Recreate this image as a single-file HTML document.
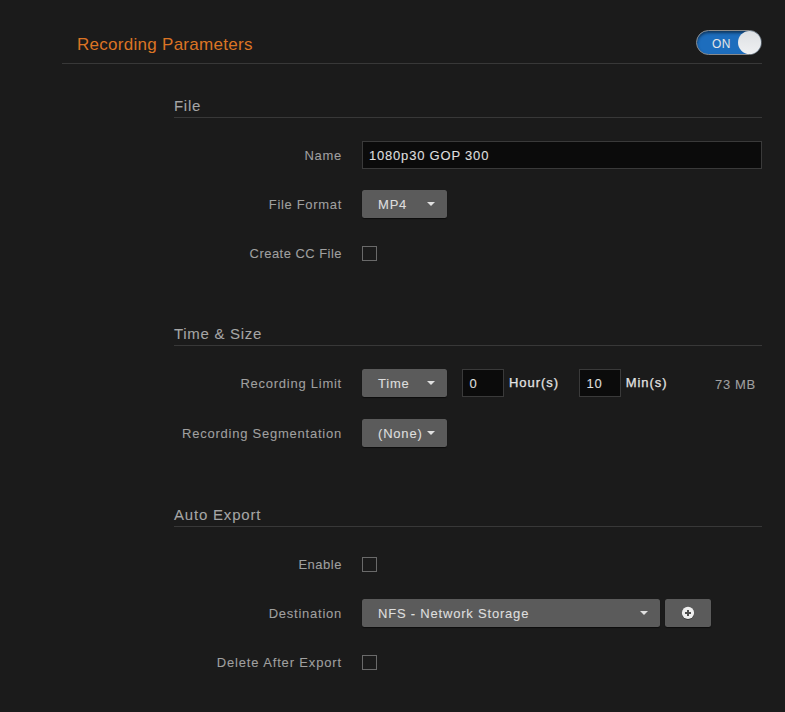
<!DOCTYPE html>
<html><head><meta charset="utf-8">
<style>
*{box-sizing:border-box;margin:0;padding:0}
html,body{width:785px;height:712px;overflow:hidden;background:#1b1b1b;font-family:"Liberation Sans",sans-serif}
.a{position:absolute}
.title{left:77px;top:35px;font-size:17px;color:#db7424;letter-spacing:0.28px;white-space:nowrap;line-height:20px}
.hr{height:1px;background:#383838}
.toggle{left:696px;top:30px;width:66px;height:25px;border-radius:13px;background:#1d6dbd;border:1px solid #8a8a8a;box-shadow:inset 0 2px 3px rgba(0,0,0,.5)}
.knob{left:738px;top:31px;width:23px;height:23px;border-radius:50%;background:linear-gradient(to bottom,#dde0e3,#eff0f2);box-shadow:1px 0 1px rgba(0,0,0,.35)}
.on{left:712px;top:37px;font-size:12px;color:#e6e6e6;line-height:14px;letter-spacing:0.3px}
.sec{left:174px;font-size:15px;color:#a6a6a6;-webkit-text-stroke:0.08px #a6a6a6;letter-spacing:0.7px;line-height:18px;white-space:nowrap}
.lbl{right:443px;font-size:13px;color:#a0a0a0;-webkit-text-stroke:0.08px #a0a0a0;letter-spacing:0.65px;line-height:16px;white-space:nowrap;text-align:right}
.inp{background:#0b0b0b;border:1px solid #3a3a3a}
.itxt{font-size:13px;color:#dedede;-webkit-text-stroke:0.12px #dedede;letter-spacing:0.8px;line-height:16px;white-space:nowrap}
.btn{background:#5b5b5b;border-radius:2.5px;box-shadow:0 1px 1px rgba(0,0,0,.55)}
.caret{width:0;height:0;border-left:4px solid transparent;border-right:4px solid transparent;border-top:4px solid #e0e0e0}
.cb{width:15px;height:15px;border:1px solid #6a6a6a}
.bold{color:#e4e4e4;-webkit-text-stroke:0.25px #e4e4e4;font-size:13px;letter-spacing:0.95px;line-height:16px;white-space:nowrap}
</style></head><body>
<div class="a title">Recording Parameters</div>
<div class="a toggle"></div>
<div class="a on">ON</div>
<div class="a knob"></div>
<div class="a hr" style="left:62px;top:63px;width:700px"></div>

<div class="a sec" style="top:97px">File</div>
<div class="a hr" style="left:174px;top:117px;width:588px"></div>

<div class="a lbl" style="top:148px;letter-spacing:0.72px">Name</div>
<div class="a inp" style="left:362px;top:141px;width:400px;height:28px"></div>
<div class="a itxt" style="left:369px;top:148px">1080p30 GOP 300</div>

<div class="a lbl" style="top:197px;letter-spacing:0.68px">File Format</div>
<div class="a btn" style="left:362px;top:190px;width:85px;height:28px"></div>
<div class="a itxt" style="left:378px;top:197px">MP4</div>
<div class="a caret" style="left:427px;top:202px"></div>

<div class="a lbl" style="top:246px;letter-spacing:0.46px">Create CC File</div>
<div class="a cb" style="left:362px;top:246px"></div>

<div class="a sec" style="top:325px">Time &amp; Size</div>
<div class="a hr" style="left:174px;top:345px;width:588px"></div>

<div class="a lbl" style="top:376px;letter-spacing:0.75px">Recording Limit</div>
<div class="a btn" style="left:362px;top:369px;width:85px;height:28px"></div>
<div class="a itxt" style="left:378px;top:376px">Time</div>
<div class="a caret" style="left:427px;top:381px"></div>
<div class="a inp" style="left:462px;top:369px;width:42px;height:28px"></div>
<div class="a itxt" style="left:469.5px;top:376px">0</div>
<div class="a bold" style="left:509px;top:375px">Hour(s)</div>
<div class="a inp" style="left:579px;top:369px;width:42px;height:28px"></div>
<div class="a itxt" style="left:586.5px;top:376px">10</div>
<div class="a bold" style="left:625.7px;top:375px">Min(s)</div>
<div class="a lbl" style="left:715px;top:377px;right:auto">73 MB</div>

<div class="a lbl" style="top:426px;letter-spacing:0.77px">Recording Segmentation</div>
<div class="a btn" style="left:362px;top:419px;width:85px;height:28px"></div>
<div class="a itxt" style="left:378px;top:426px">(None)</div>
<div class="a caret" style="left:427px;top:431px"></div>

<div class="a sec" style="top:506px;letter-spacing:0.8px">Auto Export</div>
<div class="a hr" style="left:174px;top:526px;width:588px"></div>

<div class="a lbl" style="top:557px;letter-spacing:0.52px">Enable</div>
<div class="a cb" style="left:362px;top:557px"></div>

<div class="a lbl" style="top:606px;letter-spacing:0.75px">Destination</div>
<div class="a btn" style="left:362px;top:599px;width:298px;height:28px"></div>
<div class="a itxt" style="left:378px;top:606px">NFS - Network Storage</div>
<div class="a caret" style="left:640px;top:611px"></div>
<div class="a btn" style="left:665px;top:599px;width:46px;height:28px"></div>
<svg class="a" style="left:681px;top:606px" width="14" height="15" viewBox="0 0 14 15"><circle cx="7" cy="7.6" r="6.1" fill="rgba(0,0,0,.45)"/><circle cx="7" cy="6.9" r="6.1" fill="#efefef"/><path d="M7 3.9v6M4 6.9h6" stroke="#505050" stroke-width="2"/></svg>

<div class="a lbl" style="top:655px;letter-spacing:0.85px">Delete After Export</div>
<div class="a cb" style="left:362px;top:655px"></div>
</body></html>
